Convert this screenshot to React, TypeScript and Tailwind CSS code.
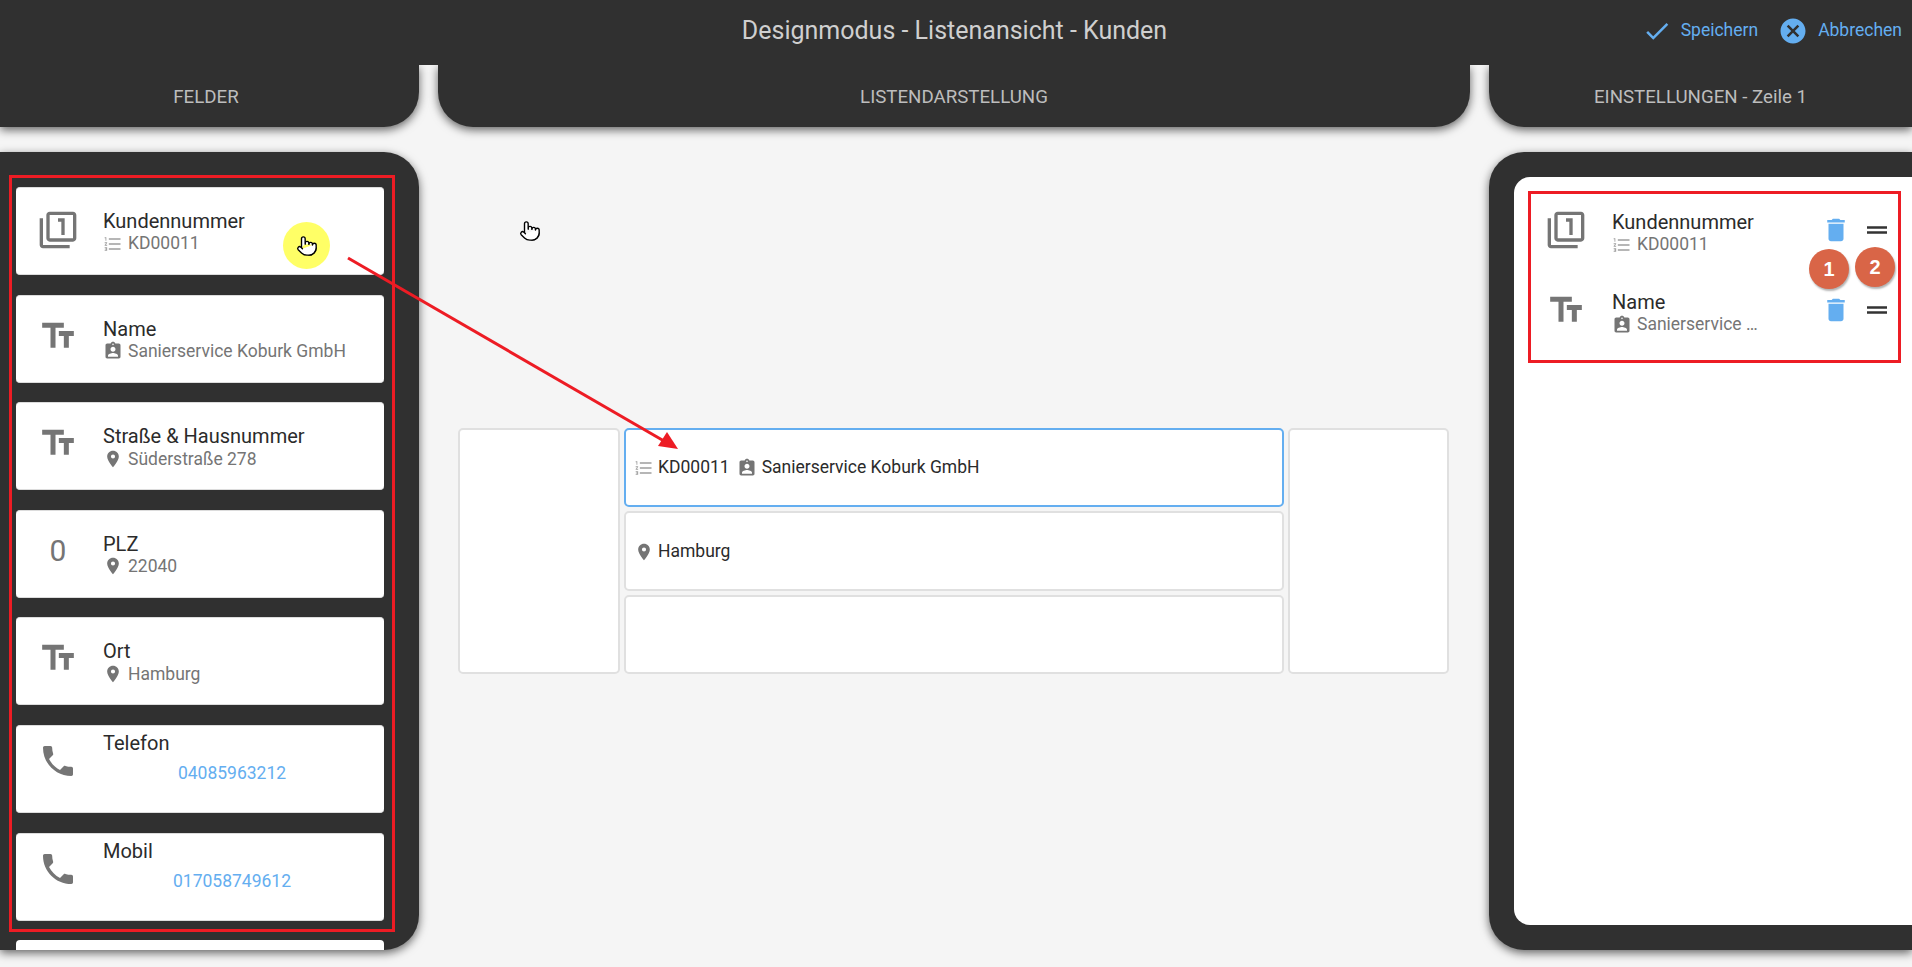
import type { ReactNode } from 'react'
import {
  MdAssignmentInd,
  MdCancel,
  MdCheck,
  MdDelete,
  MdDragHandle,
  MdFilter1,
  MdFormatListNumbered,
  MdPhone,
  MdPlace,
  MdTextFields,
} from 'react-icons/md'
import { Pointer } from 'lucide-react'

const subIcons = {
  list: <MdFormatListNumbered size={20} className="text-[#9e9e9e]" />,
  person: <MdAssignmentInd size={20} className="text-[#757575]" />,
  place: <MdPlace size={20} className="text-[#757575]" />,
}

type SubIcon = keyof typeof subIcons

type Field = {
  label: string
  icon: ReactNode
  iconClass: string
  sub?: string
  subIcon?: SubIcon
  phone?: string
}

const textIcon = <MdTextFields size={40} />

const fields: Field[] = [
  { label: 'Kundennummer', icon: <MdFilter1 size={40} />, iconClass: 'pt-[22px]', sub: 'KD00011', subIcon: 'list' },
  { label: 'Name', icon: textIcon, iconClass: 'pt-[20px]', sub: 'Sanierservice Koburk GmbH', subIcon: 'person' },
  { label: 'Straße & Hausnummer', icon: textIcon, iconClass: 'pt-[20px]', sub: 'Süderstraße 278', subIcon: 'place' },
  {
    label: 'PLZ',
    icon: <span className="text-[30px] leading-[40px]">0</span>,
    iconClass: 'pt-[20px]',
    sub: '22040',
    subIcon: 'place',
  },
  { label: 'Ort', icon: textIcon, iconClass: 'pt-[20px]', sub: 'Hamburg', subIcon: 'place' },
  { label: 'Telefon', icon: <MdPhone size={40} />, iconClass: 'pt-[15px]', phone: '04085963212' },
  { label: 'Mobil', icon: <MdPhone size={40} />, iconClass: 'pt-[15px]', phone: '017058749612' },
]

function SubLine({ icon, text }: { icon: SubIcon; text: string }) {
  return (
    <div className="flex items-center h-[21px] text-[17.5px] text-[#757575]">
      <span className="w-[25px] shrink-0">{subIcons[icon]}</span>
      <span className="truncate">{text}</span>
    </div>
  )
}

function FieldCard({ field }: { field: Field }) {
  return (
    <div className="flex h-[88px] shrink-0 rounded bg-white border-y border-[#dcdcdc]">
      <div className={`flex w-[87px] shrink-0 justify-center pr-[3px] text-[#757575] ${field.iconClass}`}>
        {field.icon}
      </div>
      {field.phone ? (
        <div className="w-[258px] pt-[5px]">
          <div className="text-[20px] leading-[24px] text-[#2b2b2b]">{field.label}</div>
          <div className="mt-[7px] text-center text-[17.5px] leading-[22px] text-[#64aef0]">{field.phone}</div>
        </div>
      ) : (
        <div className="w-[270px] pt-[21px]">
          <div className="text-[20px] leading-[24px] text-[#2b2b2b]">{field.label}</div>
          <SubLine icon={field.subIcon!} text={field.sub!} />
        </div>
      )}
    </div>
  )
}

function SettingsRow({ field }: { field: Field }) {
  return (
    <div className="flex h-[80px]">
      <div className="flex w-[98px] shrink-0 justify-center pl-[6px] pt-[19px] text-[#757575]">{field.icon}</div>
      <div className="w-[209px] shrink-0 pt-[19px]">
        <div className="text-[20px] leading-[24px] text-[#2b2b2b]">{field.label}</div>
        <div className="w-[149px] whitespace-nowrap">
          <SubLine icon={field.subIcon!} text={field.sub!} />
        </div>
      </div>
      <div className="flex pt-[24px] gap-[11px] h-fit">
        <MdDelete size={30} className="text-[#64aef0]" />
        <MdDragHandle size={30} className="text-[#333333]" />
      </div>
    </div>
  )
}

function Tab({ className, children }: { className: string; children: ReactNode }) {
  return (
    <div
      className={`flex h-[62px] items-center justify-center bg-[#303030] pt-[2px] text-[18.7px] text-[#bdbdbd] shadow-[0_3px_10px_rgba(0,0,0,0.6)] ${className}`}
    >
      {children}
    </div>
  )
}

function Badge({ n, className }: { n: number; className: string }) {
  return (
    <div
      className={`absolute flex h-[40px] w-[40px] items-center justify-center rounded-full bg-[#d96547] font-['Liberation_Sans',sans-serif] text-[20px] font-bold text-white shadow-[1px_2px_2px_rgba(0,0,0,0.3)] ${className}`}
    >
      {n}
    </div>
  )
}

function Hand({ className }: { className: string }) {
  return <Pointer size={22} strokeWidth={1.5} className={`absolute fill-white text-black ${className}`} />
}

export default function App() {
  return (
    <div className="relative flex h-screen flex-col overflow-hidden bg-[#f5f5f5] font-[Roboto,sans-serif]">
      {/* Header */}
      <div className="relative z-10 flex h-[65px] shrink-0 items-center bg-[#303030] pb-[4px]">
        <div className="flex-1" />
        <div className="ml-[7px] text-[25px] text-[#cfcfcf]">Designmodus - Listenansicht - Kunden</div>
        <div className="flex flex-1 items-center justify-end pr-[10px] text-[17.5px] text-[#64aef0]">
          <MdCheck size={30} className="mr-[9px]" />
          <span className="mr-[20px]">Speichern</span>
          <MdCancel size={30} className="mr-[10px]" />
          <span>Abbrechen</span>
        </div>
      </div>

      {/* Tabs */}
      <div className="grid shrink-0 grid-cols-[419px_1fr_423px] gap-[19px]">
        <Tab className="rounded-br-[35px] pr-[7px]">FELDER</Tab>
        <Tab className="rounded-b-[35px]">LISTENDARSTELLUNG</Tab>
        <Tab className="rounded-bl-[35px]">EINSTELLUNGEN - Zeile 1</Tab>
      </div>

      {/* Panels */}
      <div className="grid min-h-0 flex-1 grid-cols-[419px_1fr_423px] gap-[19px] pt-[25px] pb-[17px]">
        <div className="flex flex-col gap-[19.6px] overflow-hidden rounded-r-[35px] bg-[#303030] pt-[35px] pl-[16px] pr-[35px] shadow-[0_3px_10px_rgba(0,0,0,0.6)]">
          {fields.map((f) => (
            <FieldCard key={f.label} field={f} />
          ))}
          <div className="h-[88px] shrink-0 rounded bg-white" />
        </div>

        <div className="flex items-center justify-center pl-[20px] pr-[21px]">
          <div className="flex h-[246px] w-full gap-[4px]">
            <div className="w-[162px] shrink-0 rounded-[5px] border-2 border-[#e0e0e0] bg-white" />
            <div className="flex flex-1 flex-col gap-[4px]">
              <div className="flex flex-1 items-center rounded-[5px] border-[2.5px] border-[#64aef0] bg-white pl-[8px] text-[17.5px] text-[#2b2b2b]">
                <MdFormatListNumbered size={20} className="mr-[4px] text-[#9e9e9e]" />
                <span className="mr-[7px]">KD00011</span>
                <MdAssignmentInd size={20} className="mr-[5px] text-[#757575]" />
                <span>Sanierservice Koburk GmbH</span>
              </div>
              <div className="flex flex-1 items-center rounded-[5px] border-2 border-[#e0e0e0] bg-white pl-[8px] pt-[1px] text-[17.5px] text-[#2b2b2b]">
                <MdPlace size={20} className="mr-[4px] text-[#757575]" />
                <span>Hamburg</span>
              </div>
              <div className="flex-1 rounded-[5px] border-2 border-[#e0e0e0] bg-white" />
            </div>
            <div className="w-[161px] shrink-0 rounded-[5px] border-2 border-[#e0e0e0] bg-white" />
          </div>
        </div>

        <div className="rounded-l-[35px] bg-[#303030] py-[25px] pl-[25px] shadow-[0_3px_10px_rgba(0,0,0,0.6)]">
          <div className="h-full rounded-l-[16px] bg-white pt-[14px]">
            <SettingsRow field={fields[0]} />
            <SettingsRow field={fields[1]} />
          </div>
        </div>
      </div>

      {/* Annotations */}
      <div className="pointer-events-none absolute left-[9px] top-[175px] z-20 h-[757px] w-[386px] border-[3px] border-[#ed1c24]" />
      <div className="pointer-events-none absolute left-[1528px] top-[191px] z-20 h-[172px] w-[373px] border-[3px] border-[#ed1c24]" />
      <svg className="pointer-events-none absolute inset-0 z-20" width="1912" height="967">
        <line x1="348" y1="258" x2="664" y2="441" stroke="#ed1c24" strokeWidth="3" />
        <polygon points="678,449 658,446 667,432" fill="#ed1c24" />
      </svg>
      <Badge n={1} className="left-[1809px] top-[249px] z-30" />
      <Badge n={2} className="left-[1855px] top-[247px] z-30" />
      <div className="absolute left-[283px] top-[222px] z-30 h-[47px] w-[47px] rounded-full bg-[#ffff66]" />
      <Hand className="left-[296px] top-[235px] z-30" />
      <Hand className="left-[519px] top-[220px] z-30" />
    </div>
  )
}
